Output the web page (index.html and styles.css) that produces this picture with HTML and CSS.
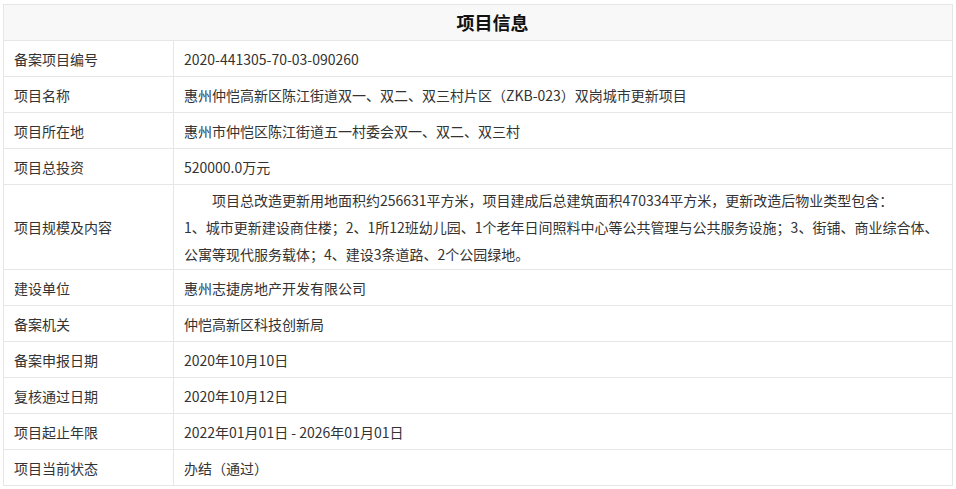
FILE: index.html
```html
<!DOCTYPE html>
<html lang="zh-CN">
<head>
<meta charset="utf-8">
<title>项目信息</title>
<link rel="stylesheet" href="styles.css">
</head>
<body>
<table class="info">
  <colgroup><col class="col-label"><col class="col-value"></colgroup>
  <thead>
    <tr><th colspan="2" class="title">项目信息</th></tr>
  </thead>
  <tbody>
    <tr><td class="label">备案项目编号</td><td class="value">2020-441305-70-03-090260</td></tr>
    <tr><td class="label">项目名称</td><td class="value">惠州仲恺高新区陈江街道双一、双二、双三村片区（ZKB-023）双岗城市更新项目</td></tr>
    <tr><td class="label">项目所在地</td><td class="value">惠州市仲恺区陈江街道五一村委会双一、双二、双三村</td></tr>
    <tr><td class="label">项目总投资</td><td class="value">520000.0万元</td></tr>
    <tr><td class="label">项目规模及内容</td><td class="value multi"><span class="indent">项目总改造更新用地面积约256631平方米，项目建成后总建筑面积470334平方米，更新改造后物业类型包含：</span><br>1、城市更新建设商住楼；2、1所12班幼儿园、1个老年日间照料中心等公共管理与公共服务设施；3、街铺、商业综合体、<br>公寓等现代服务载体；4、建设3条道路、2个公园绿地。</td></tr>
    <tr><td class="label">建设单位</td><td class="value">惠州志捷房地产开发有限公司</td></tr>
    <tr><td class="label">备案机关</td><td class="value">仲恺高新区科技创新局</td></tr>
    <tr><td class="label">备案申报日期</td><td class="value">2020年10月10日</td></tr>
    <tr><td class="label">复核通过日期</td><td class="value">2020年10月12日</td></tr>
    <tr><td class="label">项目起止年限</td><td class="value">2022年01月01日 - 2026年01月01日</td></tr>
    <tr><td class="label">项目当前状态</td><td class="value">办结（通过）</td></tr>
  </tbody>
</table>
</body>
</html>
```
FILE: styles.css
```css
html, body {
  margin: 0;
  padding: 0;
  background: #ffffff;
}
body {
  padding: 4px 3px 0 3px;
  font-family: "Noto Sans CJK SC", "Microsoft YaHei", sans-serif;
  font-size: 14px;
  color: #333333;
}
.info {
  width: 950px;
  border-collapse: collapse;
  table-layout: fixed;
}
.col-label {
  width: 170px;
}
.info th, .info td {
  border: 1px solid #e6e6e6;
}
.title {
  height: 35px;
  padding: 0 0 0 29px;
  background: #f8f8f8;
  font-size: 18px;
  font-weight: bold;
  color: #111111;
  text-align: center;
  line-height: 35px;
}
.label {
  height: 35px;
  padding: 0 10px;
  line-height: 20px;
  vertical-align: middle;
  white-space: nowrap;
}
.value {
  height: 35px;
  padding: 0 10px;
  line-height: 20px;
  vertical-align: middle;
  white-space: nowrap;
}
.multi {
  height: auto;
  padding: 2px 10px 1px 10px;
  line-height: 27px;
}
.indent {
  padding-left: 28px;
}
```
